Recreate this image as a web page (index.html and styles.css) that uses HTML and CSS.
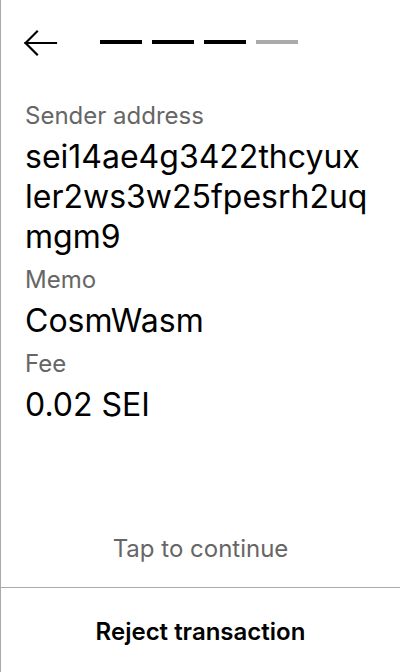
FILE: index.html
```html
<!DOCTYPE html>
<html lang="en">
<head>
<meta charset="utf-8">
<title>Review transaction</title>
<link rel="stylesheet" href="styles.css">
</head>
<body>
<div class="screen">
  <header class="header">
    <button class="back" aria-label="Back">
      <svg width="34" height="30" viewBox="0 0 34 30" fill="none" stroke="#000" stroke-width="2.2" stroke-linecap="square">
        <path d="M1.5 15 H32"/>
        <path d="M13 3.5 L1.5 15 L13 26.5"/>
      </svg>
    </button>
    <div class="steps">
      <span class="step done"></span>
      <span class="step done"></span>
      <span class="step done"></span>
      <span class="step"></span>
    </div>
  </header>
  <main class="details">
    <div class="label">Sender address</div>
    <div class="value address">sei14ae4g3422thcyux<br>ler2ws3w25fpesrh2uq<br>mgm9</div>
    <div class="label">Memo</div>
    <div class="value">CosmWasm</div>
    <div class="label">Fee</div>
    <div class="value">0.02 SEI</div>
  </main>
  <div class="tap">Tap to continue</div>
  <footer class="footer">
    <button class="reject">Reject transaction</button>
  </footer>
</div>
</body>
</html>
```
FILE: styles.css
```css
* { box-sizing: border-box; }
html, body {
  margin: 0;
  padding: 0;
  background: #fff;
}
body {
  font-family: Inter, "Noto Sans", sans-serif;
  color: #000;
}
.screen {
  width: 400px;
  height: 672px;
  border-left: 1px solid #aaa;
  display: flex;
  flex-direction: column;
}
.header {
  display: flex;
  align-items: center;
  height: 86px;
  padding-left: 23px;
}
.back {
  border: 0;
  background: none;
  padding: 0;
  margin: 0;
  width: 34px;
  height: 30px;
  display: block;
}
.back svg { display: block; }
.steps {
  display: flex;
  gap: 10px;
  margin-left: 42px;
  margin-top: -3px;
}
.step {
  width: 42px;
  height: 4px;
  background: #aaa;
}
.step.done { background: #000; }
.details {
  padding: 16px 24px 0 24px;
  display: flex;
  flex-direction: column;
}
.label {
  font-size: 24px;
  line-height: 28px;
  color: #666;
  margin-bottom: 7px;
}
.value {
  font-size: 32px;
  line-height: 40px;
  color: #000;
  margin-bottom: 9px;
}
.tap {
  margin-top: auto;
  text-align: center;
  font-size: 24px;
  line-height: 28px;
  color: #666;
  padding-bottom: 24px;
}
.footer {
  border-top: 1px solid #aaa;
  height: 85px;
  padding-top: 4px;
  display: flex;
  align-items: center;
  justify-content: center;
}
.reject {
  border: 0;
  background: none;
  padding: 0;
  font-family: Inter, "Noto Sans", sans-serif;
  font-size: 24px;
  line-height: 28px;
  font-weight: 600;
  color: #000;
}
```
